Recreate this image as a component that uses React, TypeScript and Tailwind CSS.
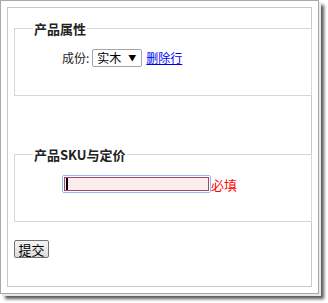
export default function App() {
  return (
    <div className="h-[303px] w-[328px] bg-white font-['Noto_Sans_CJK_SC',sans-serif] text-[12px] leading-none text-black">
      <div className="h-[294px] w-[319px] border border-[#a9a9a9] p-[6px] shadow-[2px_2px_0_0_#e8e8e8,5px_5px_3px_0_rgba(0,0,0,0.65)]">
        <div className="flex h-full flex-col border border-[#c8c8c8] pt-[13px]">
          {/* 产品属性 */}
          <fieldset className="ml-[6px] mr-[-1px] h-[75px] border border-[#d6d6d6] px-[47px]">
            <legend className="ml-[-29px] px-[1px] text-[13px] font-bold leading-[15px] text-[#222]">产品属性</legend>
            <div className="mt-[13px] flex items-center">
              <span className="text-[#222]">成份:</span>
              <div className="ml-[3px] flex h-[18px] w-[50px] shrink-0 items-center justify-between rounded-[2px] border border-[#a5a5a5] pl-[4px] pr-[5px] text-[12px]">
                <span>实木</span>
                <span className="text-[8px]">▼</span>
              </div>
              <a href="#" className="ml-[4px] text-[#0000ee] underline">删除行</a>
            </div>
          </fieldset>

          {/* 产品SKU与定价 */}
          <fieldset className="ml-[6px] mr-[-1px] mt-[51px] h-[75px] border border-[#d6d6d6] px-[47px]">
            <legend className="ml-[-29px] px-[1px] text-[13px] font-bold leading-[15px] text-[#222]">产品SKU与定价</legend>
            <div className="mt-[13px] flex items-center">
              <div className="h-[18px] w-[149px] shrink-0 rounded-[2px] border border-[#9ab8f0] p-px">
                <div className="flex h-full items-center border border-[#a0457a] bg-[#fdecec] pl-[1px]">
                  <span className="h-[12px] w-[2px] bg-black" />
                </div>
              </div>
              <span className="text-[13px] text-[#ff0000]">必填</span>
            </div>
          </fieldset>

          <div className="ml-[6px] mt-[18px]">
            <button className="flex h-[18px] w-[35px] items-center justify-center rounded-[2px] border border-[#707070] bg-gradient-to-b from-[#f4f4f4] to-[#dcdcdc] text-[13px]">
              提交
            </button>
          </div>
        </div>
      </div>
    </div>
  );
}
